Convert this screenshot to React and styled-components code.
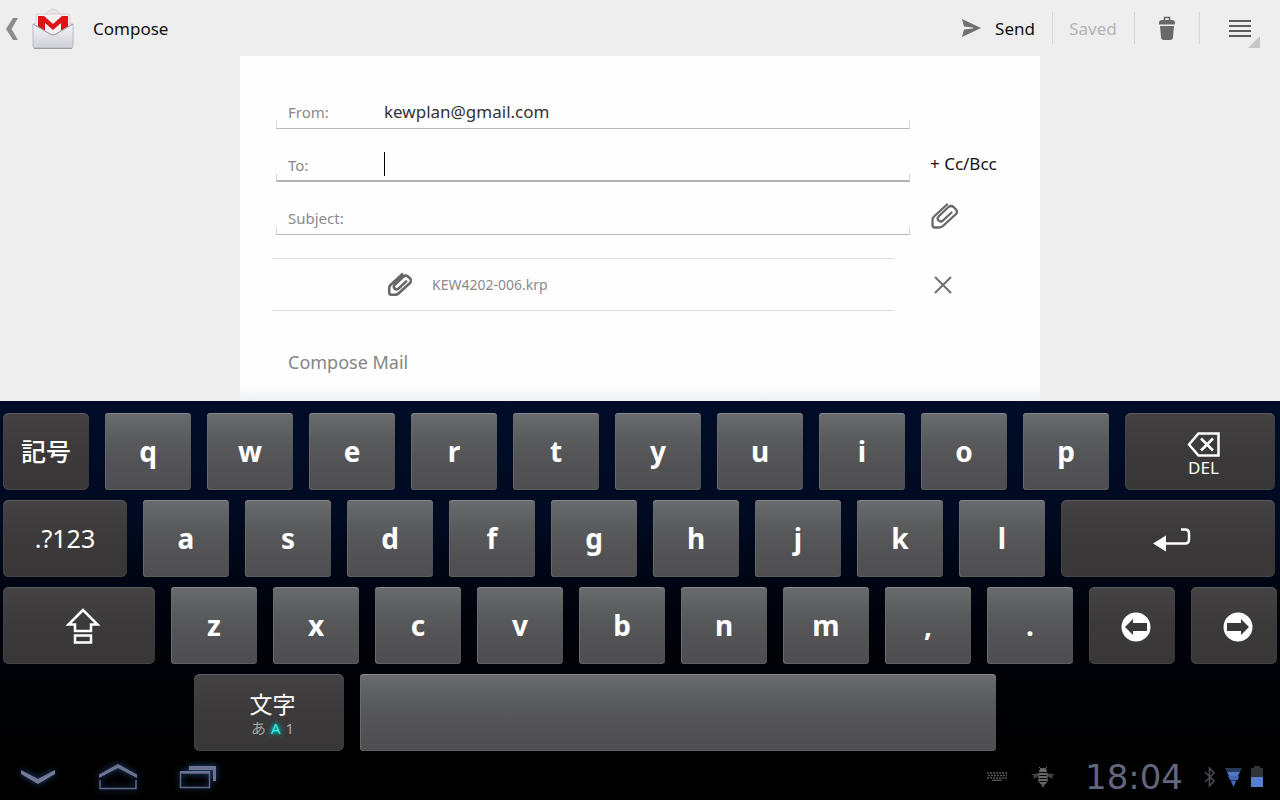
import React from "react";
import styled, { createGlobalStyle, css } from "styled-components";

const sans = '"Noto Sans", "Open Sans", "Noto Sans CJK JP", sans-serif';

const GlobalStyle = createGlobalStyle`
  *, *::before, *::after { box-sizing: border-box; }
  body { margin: 0; background: #000; font-family: ${sans}; }
  button, input, textarea { font: inherit; color: inherit; margin: 0; padding: 0; border: 0; background: none; outline: none; }
  button { cursor: pointer; }
  svg { display: block; flex: none; }
`;

const Screen = styled.div`
  display: flex;
  flex-direction: column;
  min-height: 100vh;
`;

/* ---------- action bar ---------- */

const ActionBar = styled.header`
  display: flex;
  align-items: center;
  height: 56px;
  background: #eeeeee;
  font-size: 17px;
  color: #111;
`;

const UpButton = styled.button`
  display: flex;
  align-items: center;
  gap: 13px;
  padding: 2px 0 0 5px;
`;

const Title = styled.h1`
  flex: 1;
  margin: 0;
  padding-left: 19px;
  font-size: 17px;
  font-weight: 400;
`;

const Action = styled.button`
  display: flex;
  align-items: center;
  justify-content: center;
  gap: 14px;
  height: 32px;
  min-width: ${(p) => p.$width || 0}px;
  padding: 0 17px 0 16px;
  & + & { border-left: 1px solid #d6d6d6; }
  &:disabled { color: #b4b4b4; }
`;

const MenuAction = styled(Action)`
  position: relative;
`;

const Corner = styled.span`
  position: absolute;
  right: 20px;
  bottom: -4px;
  border-left: 12px solid transparent;
  border-bottom: 12px solid #c6c6c6;
`;

/* ---------- compose form ---------- */

const Workspace = styled.main`
  flex: 1;
  display: flex;
  justify-content: center;
  background: #eeeeee;
`;

const Sheet = styled.form`
  display: flex;
  flex-direction: column;
  width: 100%;
  max-width: 800px;
  padding-top: 20px;
  background: linear-gradient(to top, #eff1f4, #fefefe 16px);
`;

const FieldRow = styled.div`
  display: grid;
  grid-template-columns: 1fr 74px;
  column-gap: 20px;
  align-items: end;
  height: 53px;
  padding: 0 36px;
`;

const Field = styled.div`
  position: relative;
  display: flex;
  align-items: center;
  height: 36px;
  padding-left: 12px;
  &::after {
    content: "";
    position: absolute;
    inset: auto 0 0 0;
    height: 8px;
    border: 1px solid #d6d6d6;
    border-top: 0;
    border-bottom: ${(p) => (p.$focused ? "2px solid #b2b2b2" : "1px solid #b8b8b8")};
    pointer-events: none;
  }
`;

const Label = styled.label`
  width: 96px;
  padding-top: 2px;
  font-size: 15px;
  color: #8a8a8a;
`;

const TextInput = styled.input`
  flex: 1;
  min-width: 0;
  height: 24px;
  font-size: 17px;
  color: #333;
  ${(p) =>
    p.$caret &&
    css`
      border-left: 1px solid #000;
      caret-color: transparent;
    `}
`;

const SideButton = styled.button`
  display: flex;
  align-items: center;
  height: 38px;
  font-size: 17px;
  color: #111;
  white-space: nowrap;
`;

const AttachmentRow = styled.div`
  display: grid;
  grid-template-columns: 1fr 72px;
  column-gap: 38px;
  align-items: center;
  margin-top: 23px;
  padding: 0 36px 0 32px;
`;

const Attachment = styled.div`
  display: flex;
  align-items: center;
  gap: 20px;
  height: 53px;
  padding-left: 115px;
  border: solid #dedede;
  border-width: 1px 0;
  font-size: 14px;
  color: #8a8a8a;
`;

const Body = styled.textarea`
  flex: 1;
  display: block;
  min-height: 48px;
  margin-top: 39px;
  padding: 0 48px;
  font-size: 18px;
  line-height: 24px;
  resize: none;
  overflow: hidden;
  &::placeholder { color: #858585; opacity: 1; }
`;

/* ---------- keyboard ---------- */

const Keyboard = styled.section`
  display: flex;
  flex-direction: column;
  gap: 10px;
  padding-top: 12px;
  background: linear-gradient(#000c28, #000a20 35%, #00030c 60%, #000);
`;

const KeyRow = styled.div`
  display: flex;
  gap: 16px;
  padding: 0 ${(p) => (p.$wide ? 3 : 5)}px 0 3px;
`;

const Key = styled.button`
  flex: ${(p) => p.$span || 86} 1 0;
  display: flex;
  flex-direction: column;
  align-items: center;
  justify-content: center;
  min-width: 0;
  height: 77px;
  padding-bottom: 2px;
  border-radius: 4px;
  color: #fff;
  font-size: 28px;
  font-weight: 700;
  line-height: 32px;
  background: linear-gradient(#696b6d, #5a5b5d 35%, #545456 60%, #4e4e50);
  box-shadow: inset 0 1px #85888c, inset 1px 0 #686b6e, inset 0 -1px #5e5e60;
`;

const DarkKey = styled(Key)`
  border-radius: 6px;
  font-size: 25px;
  font-weight: ${(p) => p.$weight || 400};
  background: linear-gradient(#454243, #3b393a 50%, #383637);
  box-shadow: inset 0 1px #5c5b5e, inset 0 -1px #454344, inset 1px 0 #454346;
`;

const IconKey = styled(DarkKey)`
  padding: 2px 0 0;
  & > * { margin-left: 7px; }
`;

const DeleteKey = styled(IconKey)`
  padding-top: 8px;
`;

const Spacer = styled.span`
  flex: ${(p) => p.$span} 1 0;
`;

const KeyCaption = styled.span`
  font-size: 17px;
  font-weight: 400;
  line-height: 22px;
`;

const ModeName = styled.span`
  font-size: 23px;
  line-height: 28px;
`;

const ModeList = styled.span`
  display: flex;
  gap: 5px;
  font-size: 15px;
  line-height: 20px;
  color: #aaa8a9;
`;

const ActiveMode = styled.span`
  color: #35f0e6;
  text-shadow: 0 0 4px #00d8d0, 0 0 6px #00b0b0;
`;

/* ---------- system bar ---------- */

const SystemBar = styled.footer`
  display: flex;
  align-items: center;
  justify-content: space-between;
  height: 49px;
  padding: 2px 17px 0 6px;
  background: #000;
`;

const Nav = styled.nav`
  display: flex;
  gap: 16px;
`;

const NavButton = styled.button`
  display: flex;
  align-items: center;
  justify-content: center;
  width: 64px;
  height: 47px;
  svg { filter: drop-shadow(0 0 3px #28508c); }
`;

const Status = styled.div`
  display: flex;
  align-items: center;
  gap: 9px;
`;

const Notifications = styled.div`
  display: flex;
  align-items: center;
  gap: 24px;
  padding-right: 9px;
`;

const Clock = styled.time`
  min-width: 122px;
  text-align: center;
  font-family: "DejaVu Sans", sans-serif;
  font-size: 34px;
  line-height: 40px;
  color: #62667c;
`;

/* ---------- icons ---------- */

const BackIcon = () => (
  <svg width="14" height="24" viewBox="0 0 14 24">
    <path d="M8 1h5L6.500 12 13 23H8L1 12z" fill="#8c8c8c" />
  </svg>
);

const GmailIcon = () => (
  <svg width="42" height="42" viewBox="0 0 42 42">
    <defs>
      <linearGradient id="paper" x1="0" y1="0" x2="0" y2="1">
        <stop offset="0" stopColor="#f5f5f8" />
        <stop offset="1" stopColor="#cfd0d8" />
      </linearGradient>
    </defs>
    <path d="M1 17 18 2q3-2 6 0l17 15z" fill="#e8e8ea" stroke="#d2d2d4" />
    <path d="M4 8q0-2 2-2h30q2 0 2 2v20H4z" fill="#f4f0f0" stroke="#d8d2d2" />
    <path d="M6 8h6l9 8 9-8h6v15h-7v-8l-8 7-8-7v8H6z" fill="#dc1418" />
    <path d="M1 16v22q0 2 2 2h36q2 0 2-2V16L24 26q-3 2-6 0z" fill="url(#paper)" stroke="#b9b9c1" />
    <path d="M2 38 17 27l4 2 4-2 15 11" fill="none" stroke="#dadae0" />
    <path d="M1 16 18 26q3 2 6 0l17-10" fill="none" stroke="#a89ea4" />
    <path d="M2 40.500h38" stroke="#9c9ca2" />
  </svg>
);

const SendIcon = () => (
  <svg width="19" height="20" viewBox="0 0 19 20">
    <path d="M0 1 19 10 0 19 2 11.500 11 10.500v-1L2 8.500z" fill="#707070" />
  </svg>
);

const TrashIcon = () => (
  <svg width="18" height="24" viewBox="0 0 18 24">
    <path d="M6.500 4V1.500h5V4" fill="none" stroke="#686868" strokeWidth="1.600" />
    <path d="M1 7q0-3 3-3h10q3 0 3 3v1.500H1z" fill="#686868" />
    <path d="M2 10h14l-1 11q0 3-3 3H6q-3 0-3-3z" fill="#686868" />
  </svg>
);

const MenuIcon = () => (
  <svg width="22" height="18" viewBox="0 0 22 18">
    <path d="M0 2h22M0 7h22M0 12h22M0 17h22" stroke="#5c5c5c" strokeWidth="2" />
  </svg>
);

const ClipIcon = ({ size, heavy }) => (
  <svg width={size} height={size} viewBox="0 0 28 28">
    <path
      d="M17 2.500 4 14.500Q2.500 16 2.500 18v5q0 2.500 2.500 2.500h4q2.500 0 4.500-2L26 12q2-2.500 0-4.500L23.500 5q-2.500-2-5 0L9 14q-2.500 2.500-.5 4.500t4.500 0l8.500-8"
      fill="none"
      stroke="#686868"
      strokeWidth={heavy ? 2.900 : 2.300}
      strokeLinecap="round"
      strokeLinejoin="round"
    />
  </svg>
);

const CloseIcon = () => (
  <svg width="22" height="20" viewBox="0 0 22 20">
    <path d="m3 2 16 16M19 2 3 18" stroke="#707070" strokeWidth="2" />
  </svg>
);

const DeleteIcon = () => (
  <svg width="34" height="25" viewBox="0 0 34 25">
    <path d="M2 12.500 11.500 1.500h20v22h-20z" fill="none" stroke="#fff" strokeWidth="2.500" />
    <path d="m14 6.500 12 12M26 6.500l-12 12" stroke="#fff" strokeWidth="2.500" />
  </svg>
);

const EnterIcon = () => (
  <svg width="38" height="24" viewBox="0 0 38 24">
    <path d="M28 1.500h4q4 0 4 4v6q0 4-4 4H11" fill="none" stroke="#fff" strokeWidth="2.500" />
    <path d="M0 15.500 13 7.500v16z" fill="#fff" />
  </svg>
);

const ShiftIcon = () => (
  <svg width="36" height="38" viewBox="0 0 36 38">
    <path d="M18 2 3.500 16.500H10v6.500h16v-6.500h6.500z" fill="none" stroke="#fff" strokeWidth="2.500" />
    <path d="M10 27.500h16v7H10z" fill="none" stroke="#fff" strokeWidth="2.500" />
  </svg>
);

const ArrowIcon = ({ right }) => (
  <svg width="30" height="30" viewBox="0 0 30 30">
    <circle cx="15" cy="15" r="14.500" fill="#fff" />
    <path
      d={right ? "M4 11h14V7l8 8-8 8v-4H4z" : "M26 11H12V7l-8 8 8 8v-4h14z"}
      fill="#3a3839"
    />
  </svg>
);

const HideIcon = () => (
  <svg width="34" height="16" viewBox="0 0 34 16">
    <path d="M0 1v4l17 10 17-10V1L17 10z" fill="#747b94" />
  </svg>
);

const HomeIcon = () => (
  <svg width="40" height="26" viewBox="0 0 40 26">
    <path d="M1 10.500 20 0l19 10.500V14L20 4 1 14z" fill="#6c7490" />
    <path d="M2 16v8.500h36V16" fill="none" stroke="#626a86" strokeWidth="1.500" />
  </svg>
);

const RecentsIcon = () => (
  <svg width="38" height="24" viewBox="0 0 38 24">
    <path d="M10 1h27v15h-3V5H10z" fill="#6c7490" />
    <path d="M1.500 8h29v14.500h-29z" fill="none" stroke="#626a86" strokeWidth="1.500" />
    <path d="M1 7h30" stroke="#6c7490" strokeWidth="2" />
  </svg>
);

const KeyboardIcon = () => (
  <svg width="20" height="9" viewBox="0 0 20 9">
    <path d="M0 1h20M1 3.500h19M0 6h20" stroke="#585858" strokeWidth="1.500" strokeDasharray="2 1" />
    <path d="M5 8.300h10" stroke="#585858" strokeWidth="1.300" />
  </svg>
);

const BugIcon = () => (
  <svg width="24" height="20" viewBox="0 0 24 20">
    <path d="m8 0 2 2M16 0l-2 2" stroke="#6a6a6a" />
    <path d="M8 5q0-4 4-4t4 4z" fill="#6a6a6a" />
    <path d="M8 6.500 0 7l3 2-1 3 6-3zM16 6.500l8 .5-3 2 1 3-6-3z" fill="#444" />
    <path d="M7.500 7h9M7.500 10h9M7.500 13h9M9 16h6" stroke="#686868" strokeWidth="2" />
    <path d="M8 6v9l4 4 4-4V6" fill="none" stroke="#5c5c5c" />
    <path d="M12 16v4" stroke="#686868" strokeWidth="1.500" />
  </svg>
);

const BluetoothIcon = () => (
  <svg width="12" height="20" viewBox="0 0 12 20">
    <path d="m1 5 9 9-4.500 5V1L10 6l-9 9" fill="none" stroke="#484b52" strokeWidth="1.600" />
  </svg>
);

const SignalIcon = () => (
  <svg width="17" height="20" viewBox="0 0 17 20">
    <path d="M0 1h17l-2 4H2z" fill="#29375a" />
    <path d="M2 5h13l-2 4H4z" fill="#5079c4" />
    <path d="M3 9h11l-1 4H5zM5.500 13.500h6l-3 6.500z" fill="#4268b4" />
  </svg>
);

const BatteryIcon = () => (
  <svg width="12" height="22" viewBox="0 0 12 22">
    <path d="M3 0h6v2h3v9H0V2h3z" fill="#303338" />
    <path d="M0 11h12v10H0z" fill="#557fd4" />
  </svg>
);

const letters = (text) => [...text].map((char) => <Key key={char} type="button">{char}</Key>);

export default function App() {
  return (
    <Screen>
      <GlobalStyle />
      <ActionBar>
        <UpButton type="button" aria-label="Back to Gmail">
          <BackIcon />
          <GmailIcon />
        </UpButton>
        <Title>Compose</Title>
        <Action type="submit" form="compose"><SendIcon />Send</Action>
        <Action type="button" disabled $width={82}>Saved</Action>
        <Action type="button" aria-label="Discard" $width={65}><TrashIcon /></Action>
        <MenuAction type="button" aria-label="More options" $width={81}>
          <MenuIcon />
          <Corner />
        </MenuAction>
      </ActionBar>

      <Workspace>
        <Sheet id="compose" onSubmit={(event) => event.preventDefault()}>
          <FieldRow>
            <Field>
              <Label htmlFor="from">From:</Label>
              <TextInput id="from" defaultValue="kewplan@gmail.com" />
            </Field>
          </FieldRow>
          <FieldRow>
            <Field $focused>
              <Label htmlFor="to">To:</Label>
              <TextInput id="to" $caret />
            </Field>
            <SideButton type="button">+ Cc/Bcc</SideButton>
          </FieldRow>
          <FieldRow>
            <Field>
              <Label htmlFor="subject">Subject:</Label>
              <TextInput id="subject" />
            </Field>
            <SideButton type="button" aria-label="Attach file"><ClipIcon size={28} /></SideButton>
          </FieldRow>
          <AttachmentRow>
            <Attachment><ClipIcon size={25} heavy />KEW4202-006.krp</Attachment>
            <SideButton type="button" aria-label="Remove attachment"><CloseIcon /></SideButton>
          </AttachmentRow>
          <Body aria-label="Message" placeholder="Compose Mail" rows={1} />
        </Sheet>
      </Workspace>

      <Keyboard aria-label="Keyboard">
        <KeyRow>
          <DarkKey type="button" $weight={500}>記号</DarkKey>
          {letters("qwertyuiop")}
          <DeleteKey type="button" $span={150}>
            <DeleteIcon />
            <KeyCaption>DEL</KeyCaption>
          </DeleteKey>
        </KeyRow>
        <KeyRow>
          <DarkKey type="button" $span={124}>.?123</DarkKey>
          {letters("asdfghjkl")}
          <IconKey type="button" $span={214} aria-label="Enter"><EnterIcon /></IconKey>
        </KeyRow>
        <KeyRow $wide>
          <IconKey type="button" $span={152} aria-label="Shift"><ShiftIcon /></IconKey>
          {letters("zxcvbnm,.")}
          <IconKey type="button" aria-label="Move left"><ArrowIcon /></IconKey>
          <IconKey type="button" aria-label="Move right"><ArrowIcon right /></IconKey>
        </KeyRow>
        <KeyRow>
          <Spacer $span={175} />
          <IconKey type="button" $span={150}>
            <ModeName>文字</ModeName>
            <ModeList><span>あ</span><ActiveMode>A</ActiveMode><span>1</span></ModeList>
          </IconKey>
          <Key type="button" $span={636} aria-label="Space" />
          <Spacer $span={263} />
        </KeyRow>
      </Keyboard>

      <SystemBar>
        <Nav>
          <NavButton type="button" aria-label="Hide keyboard"><HideIcon /></NavButton>
          <NavButton type="button" aria-label="Home"><HomeIcon /></NavButton>
          <NavButton type="button" aria-label="Recent apps"><RecentsIcon /></NavButton>
        </Nav>
        <Status>
          <Notifications>
            <KeyboardIcon />
            <BugIcon />
          </Notifications>
          <Clock dateTime="18:04">18:04</Clock>
          <BluetoothIcon />
          <SignalIcon />
          <BatteryIcon />
        </Status>
      </SystemBar>
    </Screen>
  );
}
